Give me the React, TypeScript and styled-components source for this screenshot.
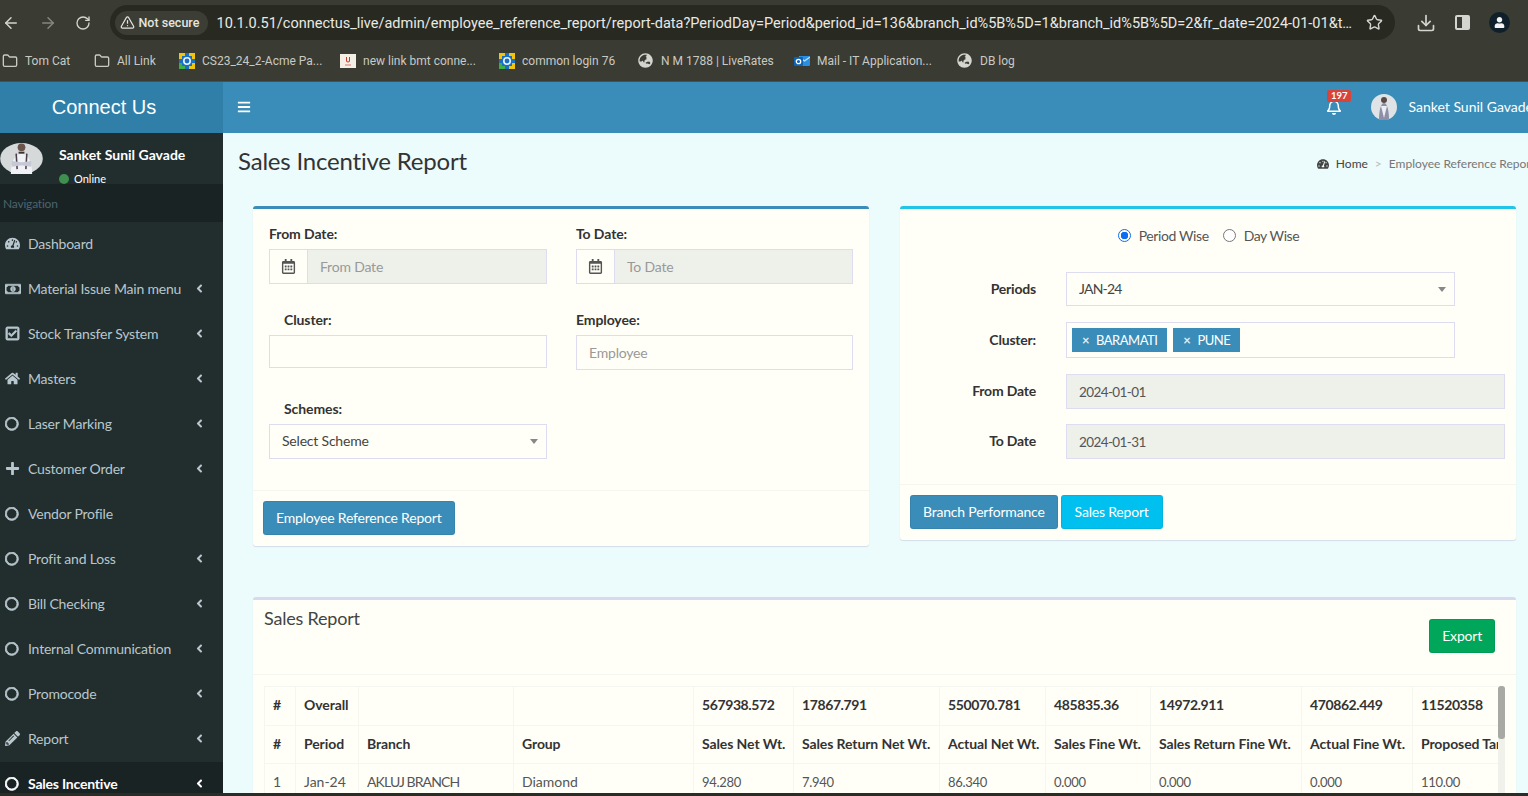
import React from "react";
import styled, { createGlobalStyle } from "styled-components";
import { ArrowLeft, ArrowRight, Download, Folder, RotateCw, Star, TriangleAlert } from "lucide-react";
import {
  FaAngleLeft,
  FaBars,
  FaGlobeAsia,
  FaHome,
  FaPencilAlt,
  FaPlus,
  FaRegBell,
  FaRegCalendarAlt,
  FaRegCheckSquare,
  FaRegCircle,
  FaRegMoneyBillAlt,
  FaTachometerAlt,
  FaUser,
} from "react-icons/fa";

const APP_FONT = `Lato, "Noto Sans", sans-serif`;
const BLUE = "#3a8db8";

const GlobalStyle = createGlobalStyle`
  html, body {
    margin: 0;
    height: 100%;
    overflow: hidden;
    background: #2b2c26;
  }
  * { box-sizing: border-box; }
`;

const Shell = styled.div`
  width: 1528px;
  height: 796px;
  display: flex;
  flex-direction: column;
  overflow: hidden;
  background: #2b2c26;
`;

/* browser chrome */
const Chrome = styled.div`
  height: 82px;
  flex: none;
  background: #3a3b33;
  font-family: Roboto, sans-serif;
  border-bottom: 1px solid #34556a;
`;

const Toolbar = styled.div`
  height: 41px;
  display: flex;
  align-items: center;
  padding: 4px 0 0 2px;
  color: #d4d5cf;
`;

const NavButton = styled.span<{ $dim?: boolean }>`
  width: 36.5px;
  flex: none;
  display: flex;
  color: ${(p) => (p.$dim ? "#85867f" : "#d4d5cf")};
`;

const UrlPill = styled.div`
  width: 1285px;
  height: 35px;
  margin-left: -2px;
  flex: none;
  display: flex;
  align-items: center;
  padding: 0 12px 0 5px;
  background: #282a22;
  border-radius: 18px;
`;

const SecureChip = styled.span`
  width: 93px;
  height: 24px;
  flex: none;
  display: flex;
  align-items: center;
  gap: 4px;
  padding-left: 5px;
  background: #3c3e36;
  border-radius: 12px;
  font-size: 12.5px;
  font-weight: 500;
  color: #e4e5df;
`;

const UrlText = styled.span`
  flex: 1;
  min-width: 0;
  margin: 2px 10px 0 9px;
  white-space: nowrap;
  overflow: hidden;
  text-overflow: ellipsis;
  font-size: 14.5px;
  color: #e9e9e4;
`;

const ToolIcons = styled.div`
  display: flex;
  align-items: center;
  margin-left: 21px;
  gap: 19px;
`;

const PanelIcon = styled.span`
  width: 15px;
  height: 15px;
  border: 2px solid #d4d5cf;
  border-radius: 2px;
  background: linear-gradient(90deg, transparent 50%, #d4d5cf 50%);
`;

const Profile = styled.span`
  width: 21px;
  height: 21px;
  border-radius: 50%;
  background: #10202a;
  color: #f4f4f4;
  display: flex;
  align-items: center;
  justify-content: center;
`;

const Bookmarks = styled.div`
  height: 40px;
  display: flex;
  align-items: center;
  padding-left: 2px;
`;

const Bookmark = styled.span<{ $w: number }>`
  width: ${(p) => p.$w}px;
  flex: none;
  display: flex;
  align-items: center;
  gap: 7px;
  font-size: 12px;
  color: #c9cac3;
  white-space: nowrap;
`;

const BookmarkIcon = styled.svg`
  width: 16px;
  height: 16px;
  flex: none;
`;

const GlobeIcon = styled.span`
  width: 16px;
  height: 16px;
  flex: none;
  display: flex;
  color: #d4d5cf;
`;

/* app header */
const AppHeader = styled.header`
  height: 51px;
  flex: none;
  display: flex;
  background: ${BLUE};
  color: #fff;
  font-family: ${APP_FONT};
`;

const Logo = styled.div`
  width: 223px;
  flex: none;
  display: flex;
  align-items: center;
  justify-content: center;
  padding-right: 15px;
  background: #2f7fa9;
  font-family: "Liberation Sans", Arial, sans-serif;
  font-size: 20px;
`;

const TopNav = styled.div`
  flex: 1;
  display: flex;
  align-items: center;
  padding: 0 0 1px 14px;
  margin-right: -5px;
`;

const Bell = styled.span`
  position: relative;
  margin-left: auto;
  display: flex;
  margin-right: 29px;
`;

const BellBadge = styled.span`
  position: absolute;
  top: -9px;
  left: 1px;
  padding: 0 3.5px;
  background: #d9443a;
  border-radius: 2px;
  font-size: 9.5px;
  line-height: 12px;
  font-weight: 700;
  color: #fff;
`;

const UserName = styled.span`
  margin-left: 11px;
  padding-bottom: 2px;
  font-size: 14px;
  white-space: nowrap;
`;

const AvatarFrame = styled.svg<{ $w: number; $h: number }>`
  width: ${(p) => p.$w}px;
  height: ${(p) => p.$h}px;
  flex: none;
`;

/* body */
const Workspace = styled.div`
  height: 660px;
  flex: none;
  display: flex;
  overflow: hidden;
  font-family: ${APP_FONT};
  letter-spacing: -0.2px;
`;

const Sidebar = styled.aside`
  width: 223px;
  flex: none;
  background: #222d2d;
  color: #b8c7ce;
`;

const UserPanel = styled.div`
  height: 51px;
  display: flex;
  padding-top: 10px;
  margin-left: -1px;
  overflow: hidden;
`;

const UserInfo = styled.div`
  margin-left: 15px;
  color: #fff;
  letter-spacing: 0;
`;

const PanelName = styled.div`
  font-size: 14px;
  font-weight: 700;
  line-height: 24px;
  white-space: nowrap;
`;

const PanelStatus = styled.div`
  display: flex;
  align-items: center;
  gap: 5px;
  margin-top: 4px;
  font-size: 11px;
  line-height: 16px;
`;

const StatusDot = styled.span`
  width: 10px;
  height: 10px;
  border-radius: 50%;
  background: #3f8f4e;
`;

const MenuHeader = styled.div`
  height: 38px;
  display: flex;
  align-items: center;
  padding-left: 3px;
  background: #1a2323;
  color: #4b646f;
  font-size: 12px;
`;

const MenuItem = styled.div<{ $active?: boolean }>`
  height: 45px;
  display: flex;
  align-items: center;
  padding: 0 0 2px 5px;
  font-size: 14px;
  background: ${(p) => (p.$active ? "#1a2323" : "transparent")};
  color: ${(p) => (p.$active ? "#fff" : "#b8c7ce")};
  font-weight: ${(p) => (p.$active ? 700 : 400)};
`;

const MenuIcon = styled.span`
  width: 23px;
  flex: none;
  display: flex;
  font-size: 15px;
`;

const ThickCircle = styled(FaRegCircle)`
  stroke: currentColor;
  stroke-width: 36px;
  font-size: 13.5px;
  margin-top: 1px;
`;

const HeavyMoney = styled(FaRegMoneyBillAlt)`
  stroke: currentColor;
  stroke-width: 24px;
  font-size: 16px;
`;

const HeavyCheck = styled(FaRegCheckSquare)`
  stroke: currentColor;
  stroke-width: 28px;
`;

const MenuLabel = styled.span`
  flex: 1;
  white-space: nowrap;
`;

const MenuCaret = styled.span`
  width: 30px;
  flex: none;
  display: flex;
  font-size: 13px;
`;

const Content = styled.main`
  flex: 1;
  min-width: 0;
  background: #ecfbfb;
  color: #333;
  overflow: hidden;
`;

const ContentHeader = styled.div`
  height: 73px;
  display: flex;
  align-items: flex-start;
  justify-content: space-between;
  padding: 13px 0 0 15px;
  margin-right: -7px;
`;

const PageTitle = styled.h1`
  margin: 0;
  font-size: 24px;
  font-weight: 400;
  line-height: 30px;
  color: #333;
`;

const Breadcrumb = styled.div`
  display: flex;
  align-items: center;
  gap: 7px;
  margin-top: 10px;
  font-size: 12px;
  letter-spacing: 0;
  color: #444;
  white-space: nowrap;
`;

const CrumbSeparator = styled.span`
  color: #bbb;
`;

const CrumbCurrent = styled.span`
  color: #777;
`;

const CardRow = styled.div`
  display: grid;
  grid-template-columns: 616px 616px;
  align-items: start;
  gap: 31px;
  margin-left: 30px;
`;

const Card = styled.section<{ $accent: string }>`
  background: #fffff8;
  border-top: 3px solid ${(p) => p.$accent};
  border-radius: 3px;
  box-shadow: 0 1px 1px rgba(60, 40, 120, 0.14);
`;

const FilterForm = styled.div`
  display: grid;
  grid-template-columns: 278px 277px;
  grid-template-rows: 86px 89px auto;
  column-gap: 29px;
  padding: 15px 0 31px 16px;
`;

const Field = styled.div`
  display: flex;
  flex-direction: column;
  gap: 5px;
`;

const FieldLabel = styled.label<{ $inset?: boolean }>`
  font-size: 14px;
  font-weight: 700;
  line-height: 20px;
  letter-spacing: -0.1px;
  color: #333;
  padding-left: ${(p) => (p.$inset ? "15px" : "0")};
`;

const InputGroup = styled.div`
  height: 35px;
  display: flex;
  border: 1px solid #dedcf0;
`;

const InputAddon = styled.span`
  width: 38px;
  flex: none;
  display: flex;
  align-items: center;
  justify-content: center;
  border-right: 1px solid #dedcf0;
  color: #555;
  font-size: 15px;
`;

const InputValue = styled.span<{ $disabled?: boolean; $date?: boolean; $h?: number; $w?: number }>`
  display: flex;
  align-items: center;
  flex: 1;
  height: ${(p) => (p.$h ? `${p.$h}px` : "auto")};
  width: ${(p) => (p.$w ? `${p.$w}px` : "auto")};
  padding: 0 12px;
  font-size: ${(p) => (p.$date ? "13.5px" : "14px")};
  letter-spacing: ${(p) => (p.$date ? "-0.6px" : "-0.2px")};
  background: ${(p) => (p.$disabled ? "#eef0ea" : "transparent")};
  color: ${(p) => (p.$date ? "#555" : "#999")};
`;

const BoxedValue = styled(InputValue)`
  flex: none;
  border: 1px solid #dedcf0;
`;

const SelectBox = styled.div<{ $w: number; $h: number }>`
  width: ${(p) => p.$w}px;
  height: ${(p) => p.$h}px;
  display: flex;
  align-items: center;
  justify-content: space-between;
  padding: 0 12px 2px;
  border: 1px solid #dedcf0;
  font-size: 14px;
  color: #444;
`;

const CapsValue = styled.span`
  letter-spacing: -0.8px;
`;

const SelectCaret = styled.span`
  width: 0;
  height: 0;
  margin: 2px -4px 0 0;
  border-left: 4px solid transparent;
  border-right: 4px solid transparent;
  border-top: 5px solid #888;
`;

const CardFooter = styled.div`
  display: flex;
  gap: 3px;
  border-top: 1px solid #f6f6f0;
  padding: 10px 10px 11px;
`;

const Button = styled.button<{ $bg: string }>`
  height: 34px;
  padding: 0 12px 2px;
  border: 1px solid rgba(0, 0, 0, 0.06);
  border-radius: 3px;
  background: ${(p) => p.$bg};
  color: #fff;
  font-family: ${APP_FONT};
  font-size: 14px;
  letter-spacing: -0.2px;
  white-space: nowrap;
`;

const SalesButton = styled(Button)`
  padding: 0 13px 2px;
`;

const RadioRow = styled.div`
  display: flex;
  align-items: center;
  justify-content: center;
  height: 20px;
  margin: 16px 0 27px;
  padding-right: 13px;
  font-size: 14px;
  letter-spacing: -0.4px;
  color: #555;
`;

const Radio = styled.span<{ $on?: boolean }>`
  width: 13px;
  height: 13px;
  margin: 0 8px 0 14px;
  border-radius: 50%;
  border: ${(p) => (p.$on ? "1px solid #0b6ff0" : "1px solid #777")};
  background: ${(p) => (p.$on ? "radial-gradient(circle, #0b6ff0 0 3.5px, #fff 4px)" : "#fff")};
`;

const SettingsForm = styled.div`
  display: grid;
  grid-template-columns: 136px 1fr;
  column-gap: 30px;
  padding: 0 11px 25px 0;
`;

const RowLabel = styled.label<{ $h: number; $gap: number }>`
  height: ${(p) => p.$h}px;
  margin-bottom: ${(p) => p.$gap}px;
  padding-bottom: 2px;
  display: flex;
  align-items: center;
  justify-content: flex-end;
  font-size: 14px;
  font-weight: 700;
  color: #333;
`;

const RowField = styled.div<{ $gap: number }>`
  margin-bottom: ${(p) => p.$gap}px;
  display: flex;
`;

const ChipBox = styled.div`
  width: 389px;
  height: 36px;
  display: flex;
  align-items: center;
  gap: 6px;
  padding-left: 5px;
  border: 1px solid #dedcf0;
`;

const Chip = styled.span`
  height: 24px;
  display: flex;
  align-items: center;
  gap: 7px;
  padding: 0 10px 1px;
  background: ${BLUE};
  color: #fff;
  font-size: 13px;
  letter-spacing: -0.5px;
`;

const ChipClose = styled.span`
  font-size: 13px;
  font-weight: 700;
  opacity: 0.85;
`;

const ReportCard = styled(Card)`
  width: 1263px;
  height: 200px;
  margin: 51px 0 0 30px;
`;

const ReportHead = styled.div`
  height: 75px;
  display: flex;
  justify-content: space-between;
  align-items: flex-start;
  border-bottom: 1px solid #f6f6f0;
  padding: 6px 21px 0 11px;
`;

const ReportTitle = styled.h3`
  margin: 0;
  font-size: 18px;
  font-weight: 400;
  line-height: 24px;
  color: #444;
`;

const ExportButton = styled(Button)`
  margin-top: 13px;
  padding: 0 12px 2px;
`;

const TableArea = styled.div`
  display: flex;
  margin: 11px 0 0 11px;
`;

const TableClip = styled.div`
  width: 1234px;
  height: 120px;
  flex: none;
  overflow: hidden;
`;

const ReportTable = styled.table`
  width: 1290px;
  table-layout: fixed;
  border-collapse: collapse;
  font-size: 14px;
`;

const ColWidth = styled.col<{ $w: number }>`
  width: ${(p) => p.$w}px;
`;

const HeadCell = styled.th<{ $num?: boolean }>`
  height: 38.5px;
  padding: 0 8px 2px;
  border: 1px solid #f6f6f0;
  text-align: left;
  font-weight: 700;
  letter-spacing: ${(p) => (p.$num ? "-0.4px" : "-0.1px")};
  color: #333;
  white-space: nowrap;
  overflow: hidden;
`;

const BodyCell = styled.td<{ $kind: "num" | "caps" | "text" }>`
  height: 38.5px;
  padding: 0 8px 2px;
  border: 1px solid #f6f6f0;
  color: #555;
  white-space: nowrap;
  font-size: ${(p) => (p.$kind === "num" ? "13px" : "14px")};
  letter-spacing: ${(p) => (p.$kind === "num" ? "-0.3px" : p.$kind === "caps" ? "-0.9px" : "0")};
`;

const ScrollTrack = styled.div`
  width: 7px;
  height: 120px;
  flex: none;
  background: #f1f1ec;
  border-radius: 3px;
`;

const ScrollThumb = styled.div`
  height: 53px;
  background: #a8a8a4;
  border-radius: 3px;
`;

const URL_TEXT =
  "10.1.0.51/connectus_live/admin/employee_reference_report/report-data?PeriodDay=Period&period_id=136&branch_id%5B%5D=1&branch_id%5B%5D=2&fr_date=2024-01-01&to_date=2024-01-31&employee=&scheme=";

const COLUMNS = [31, 63, 155, 180, 100, 146, 106, 105, 151, 111, 142];
const OVERALL = ["#", "Overall", "", "", "567938.572", "17867.791", "550070.781", "485835.36", "14972.911", "470862.449", "11520358"];
const HEADINGS = ["#", "Period", "Branch", "Group", "Sales Net Wt.", "Sales Return Net Wt.", "Actual Net Wt.", "Sales Fine Wt.", "Sales Return Fine Wt.", "Actual Fine Wt.", "Proposed Target"];
const FIRST_ROW = ["1", "Jan-24", "AKLUJ BRANCH", "Diamond", "94.280", "7.940", "86.340", "0.000", "0.000", "0.000", "110.00"];

const MENU = [
  { label: "Dashboard", icon: <FaTachometerAlt />, caret: false },
  { label: "Material Issue Main menu", icon: <HeavyMoney />, caret: true },
  { label: "Stock Transfer System", icon: <HeavyCheck />, caret: true },
  { label: "Masters", icon: <FaHome />, caret: true },
  { label: "Laser Marking", icon: <ThickCircle />, caret: true },
  { label: "Customer Order", icon: <FaPlus />, caret: true },
  { label: "Vendor Profile", icon: <ThickCircle />, caret: false },
  { label: "Profit and Loss", icon: <ThickCircle />, caret: true },
  { label: "Bill Checking", icon: <ThickCircle />, caret: true },
  { label: "Internal Communication", icon: <ThickCircle />, caret: true },
  { label: "Promocode", icon: <ThickCircle />, caret: true },
  { label: "Report", icon: <FaPencilAlt />, caret: true },
  { label: "Sales Incentive", icon: <ThickCircle />, caret: true, active: true },
];

const cellKind = (c: string) => (/^\d+\.\d+$/.test(c) ? "num" : /^[A-Z ]+$/.test(c) ? "caps" : "text");

const TileLogo = () => (
  <BookmarkIcon viewBox="0 0 16 16">
    <rect width="16" height="16" fill="#1b6fc2" />
    <path d="M0 0h6v3H3v3H0zM10 0h6v6h-3V3h-3zM13 10h3v6h-6v-3h3z" fill="#f1c40f" />
    <path d="M0 10h3v3h3v3H0z" fill="#3fae49" />
    <circle cx="8" cy="8" r="3.2" fill="none" stroke="#e8f4ff" strokeWidth="1.6" />
  </BookmarkIcon>
);

const RedLogo = () => (
  <BookmarkIcon viewBox="0 0 16 16">
    <rect y="1" width="16" height="14" fill="#f3efe6" />
    <path d="M6 4v3.5a2 2 0 0 0 4 0V4H9v3.5a1 1 0 0 1-2 0V4z" fill="#c8392b" />
    <rect x="5" y="11.5" width="6" height="1" fill="#d9756b" />
  </BookmarkIcon>
);

const MailLogo = () => (
  <BookmarkIcon viewBox="0 0 16 16">
    <rect x="5" y="3" width="11" height="10" rx="1" fill="#2a8fe0" />
    <path d="M5 4l5.5 4L16 4" fill="none" stroke="#bfe2fb" strokeWidth="1.2" />
    <rect y="4" width="9" height="9" rx="1" fill="#0f63b5" />
    <circle cx="4.5" cy="8.5" r="2.2" fill="none" stroke="#fff" strokeWidth="1.3" />
  </BookmarkIcon>
);

const Portrait = ({ w, h }: { w: number; h: number }) => (
  <AvatarFrame $w={w} $h={h} viewBox="0 0 44 32">
    <ellipse cx="22" cy="16" rx="22" ry="16" fill="#d5d9d9" />
    <path d="M11 32c0-12 4-21 11-21s11 9 11 21z" fill="#f1f2f6" />
    <circle cx="22" cy="4.5" r="4" fill="#6a544c" />
    <path d="M19 10h6" stroke="#3a3236" strokeWidth="2" />
    <path d="M16.5 11l1 16M27.5 11l-1 16" stroke="#4a3f4a" strokeWidth="1.6" />
    <path d="M12 23l20-3M32 23l-20-3" stroke="#c6c8d6" strokeWidth="3" />
  </AvatarFrame>
);

const RoundPortrait = () => (
  <AvatarFrame $w={26} $h={26} viewBox="0 0 26 26">
    <circle cx="13" cy="13" r="13" fill="#dfe3e6" />
    <path d="M8 26c0-10 2-17 5-17s5 7 5 17z" fill="#8d8fa8" />
    <circle cx="13" cy="6" r="3" fill="#5b4a44" />
    <path d="M10 12l3 12 3-12" fill="#eceef4" />
  </AvatarFrame>
);

export default function App() {
  return (
    <Shell>
      <GlobalStyle />
      <Chrome>
        <Toolbar>
          <NavButton><ArrowLeft size={18} /></NavButton>
          <NavButton $dim><ArrowRight size={18} /></NavButton>
          <NavButton><RotateCw size={16} /></NavButton>
          <UrlPill>
            <SecureChip><TriangleAlert size={15} />Not secure</SecureChip>
            <UrlText>{URL_TEXT}</UrlText>
            <Star size={17} color="#d4d5cf" />
          </UrlPill>
          <ToolIcons>
            <Download size={20} color="#d4d5cf" />
            <PanelIcon />
            <Profile><FaUser size={11} /></Profile>
          </ToolIcons>
        </Toolbar>
        <Bookmarks>
          <Bookmark $w={92}><Folder size={16} />Tom Cat</Bookmark>
          <Bookmark $w={85}><Folder size={16} />All Link</Bookmark>
          <Bookmark $w={161}><TileLogo />CS23_24_2-Acme Pa...</Bookmark>
          <Bookmark $w={159}><RedLogo />new link bmt conne...</Bookmark>
          <Bookmark $w={139}><TileLogo />common login 76</Bookmark>
          <Bookmark $w={156}><GlobeIcon><FaGlobeAsia size={15} /></GlobeIcon>N M 1788 | LiveRates</Bookmark>
          <Bookmark $w={163}><MailLogo />Mail - IT Application...</Bookmark>
          <Bookmark $w={80}><GlobeIcon><FaGlobeAsia size={15} /></GlobeIcon>DB log</Bookmark>
        </Bookmarks>
      </Chrome>

      <AppHeader>
        <Logo>Connect Us</Logo>
        <TopNav>
          <FaBars size={14} />
          <Bell>
            <FaRegBell size={16} />
            <BellBadge>197</BellBadge>
          </Bell>
          <RoundPortrait />
          <UserName>Sanket Sunil Gavade</UserName>
        </TopNav>
      </AppHeader>

      <Workspace>
        <Sidebar>
          <UserPanel>
            <Portrait w={45} h={31} />
            <UserInfo>
              <PanelName>Sanket Sunil Gavade</PanelName>
              <PanelStatus><StatusDot />Online</PanelStatus>
            </UserInfo>
          </UserPanel>
          <MenuHeader>Navigation</MenuHeader>
          {MENU.map((item) => (
            <MenuItem key={item.label} $active={item.active}>
              <MenuIcon>{item.icon}</MenuIcon>
              <MenuLabel>{item.label}</MenuLabel>
              {item.caret && <MenuCaret><FaAngleLeft /></MenuCaret>}
            </MenuItem>
          ))}
        </Sidebar>

        <Content>
          <ContentHeader>
            <PageTitle>Sales Incentive Report</PageTitle>
            <Breadcrumb>
              <FaTachometerAlt size={12} />
              <span>Home</span>
              <CrumbSeparator>&gt;</CrumbSeparator>
              <CrumbCurrent>Employee Reference Report</CrumbCurrent>
            </Breadcrumb>
          </ContentHeader>

          <CardRow>
            <Card $accent={BLUE}>
              <FilterForm>
                <Field>
                  <FieldLabel>From Date:</FieldLabel>
                  <InputGroup>
                    <InputAddon><FaRegCalendarAlt /></InputAddon>
                    <InputValue $disabled>From Date</InputValue>
                  </InputGroup>
                </Field>
                <Field>
                  <FieldLabel>To Date:</FieldLabel>
                  <InputGroup>
                    <InputAddon><FaRegCalendarAlt /></InputAddon>
                    <InputValue $disabled>To Date</InputValue>
                  </InputGroup>
                </Field>
                <Field>
                  <FieldLabel $inset>Cluster:</FieldLabel>
                  <BoxedValue $h={33} />
                </Field>
                <Field>
                  <FieldLabel>Employee:</FieldLabel>
                  <BoxedValue $h={35}>Employee</BoxedValue>
                </Field>
                <Field>
                  <FieldLabel $inset>Schemes:</FieldLabel>
                  <SelectBox $w={278} $h={35}>Select Scheme<SelectCaret /></SelectBox>
                </Field>
              </FilterForm>
              <CardFooter>
                <Button $bg={BLUE}>Employee Reference Report</Button>
              </CardFooter>
            </Card>

            <Card $accent="#22c5e8">
              <RadioRow>
                <Radio $on />Period Wise
                <Radio />Day Wise
              </RadioRow>
              <SettingsForm>
                <RowLabel $h={34} $gap={16}>Periods</RowLabel>
                <RowField $gap={16}>
                  <SelectBox $w={389} $h={34}><CapsValue>JAN-24</CapsValue><SelectCaret /></SelectBox>
                </RowField>
                <RowLabel $h={36} $gap={16}>Cluster:</RowLabel>
                <RowField $gap={16}>
                  <ChipBox>
                    <Chip><ChipClose>×</ChipClose>BARAMATI</Chip>
                    <Chip><ChipClose>×</ChipClose>PUNE</Chip>
                  </ChipBox>
                </RowField>
                <RowLabel $h={35} $gap={15}>From Date</RowLabel>
                <RowField $gap={15}>
                  <BoxedValue $disabled $date $h={35} $w={439}>2024-01-01</BoxedValue>
                </RowField>
                <RowLabel $h={35} $gap={0}>To Date</RowLabel>
                <RowField $gap={0}>
                  <BoxedValue $disabled $date $h={35} $w={439}>2024-01-31</BoxedValue>
                </RowField>
              </SettingsForm>
              <CardFooter>
                <Button $bg={BLUE}>Branch Performance</Button>
                <SalesButton $bg="#00c0ef">Sales Report</SalesButton>
              </CardFooter>
            </Card>
          </CardRow>

          <ReportCard $accent="#d8d8ee">
            <ReportHead>
              <ReportTitle>Sales Report</ReportTitle>
              <ExportButton $bg="#00a65a">Export</ExportButton>
            </ReportHead>
            <TableArea>
              <TableClip>
                <ReportTable>
                  <colgroup>
                    {COLUMNS.map((w, i) => <ColWidth key={i} $w={w} />)}
                  </colgroup>
                  <thead>
                    <tr>{OVERALL.map((c, i) => <HeadCell key={i} $num={/^\d/.test(c)}>{c}</HeadCell>)}</tr>
                    <tr>{HEADINGS.map((c, i) => <HeadCell key={i}>{c}</HeadCell>)}</tr>
                  </thead>
                  <tbody>
                    <tr>{FIRST_ROW.map((c, i) => <BodyCell key={i} $kind={cellKind(c)}>{c}</BodyCell>)}</tr>
                  </tbody>
                </ReportTable>
              </TableClip>
              <ScrollTrack><ScrollThumb /></ScrollTrack>
            </TableArea>
          </ReportCard>
        </Content>
      </Workspace>
    </Shell>
  );
}
